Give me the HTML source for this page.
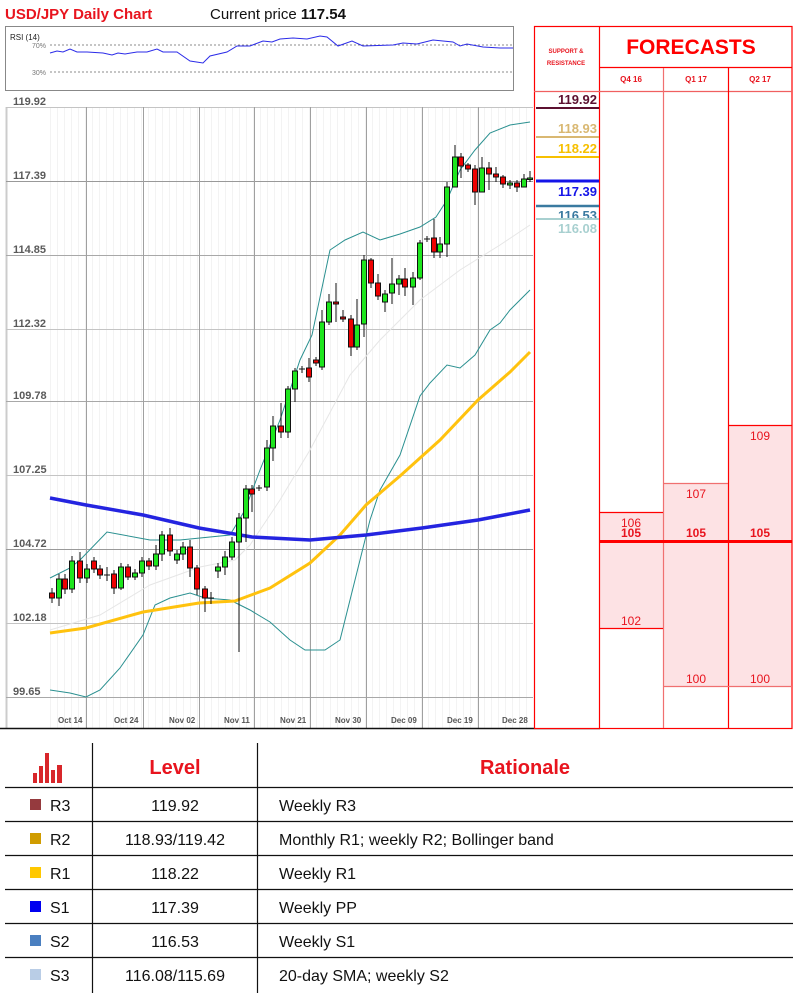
<!DOCTYPE html>
<html><head><meta charset="utf-8"><style>
html,body{margin:0;padding:0;background:#fff;}
svg{display:block;font-family:"Liberation Sans",sans-serif;}
</style></head><body>
<svg width="803" height="995" viewBox="0 0 803 995" xmlns="http://www.w3.org/2000/svg">
<defs><pattern id="fg" x="1" y="0" width="7" height="10" patternUnits="userSpaceOnUse"><rect x="0" y="0" width="1" height="10" fill="#f3f3f3"/></pattern></defs>
<!-- header -->
<text x="5" y="19" font-size="15" font-weight="bold" fill="#e8141e">USD/JPY Daily Chart</text>
<text x="210" y="19" font-size="15" fill="#111">Current price <tspan font-weight="bold">117.54</tspan></text>
<!-- RSI -->
<rect x="5.5" y="26.5" width="508" height="64" fill="#fff" stroke="#888"/>
<text x="10" y="40" font-size="8" fill="#222">RSI (14)</text>
<text x="32" y="48" font-size="7" fill="#777">70%</text>
<text x="32" y="75" font-size="7" fill="#777">30%</text>
<line x1="50" y1="45" x2="513" y2="45" stroke="#666" stroke-dasharray="2,2" stroke-width="0.8"/>
<line x1="50" y1="72" x2="513" y2="72" stroke="#666" stroke-dasharray="2,2" stroke-width="0.8"/>
<polyline fill="none" stroke="#2b2be8" stroke-width="1" points="50,53 57,51 63,52 70,49 77,52 87,52 103,53 112,55 118,53 125,54 137,52 147,52 157,49 163,52 177,52 190,61 203,63 210,56 227,52 237,46 250,46 263,41 272,42 280,39 293,38 307,39 320,36 327,37 338,46 352,41 363,46 393,45 403,43 417,44 433,40 453,42 460,46 467,44 483,47 500,48 513,48"/>
<!-- chart grid -->
<rect x="44" y="107" width="489" height="621" fill="url(#fg)"/>
<line x1="6.5" y1="107" x2="6.5" y2="728" stroke="#ccc" stroke-width="2"/>
<g stroke="#c4c4c4" stroke-width="1">
<line x1="6" y1="107.5" x2="533" y2="107.5"/><line x1="6" y1="181.5" x2="533" y2="181.5" stroke="#999"/><line x1="6" y1="255.5" x2="533" y2="255.5" stroke="#a8a8a8"/><line x1="6" y1="329.5" x2="533" y2="329.5"/><line x1="6" y1="401.5" x2="533" y2="401.5" stroke="#a8a8a8"/><line x1="6" y1="475.5" x2="533" y2="475.5"/><line x1="6" y1="549.5" x2="533" y2="549.5" stroke="#999"/><line x1="6" y1="623.5" x2="533" y2="623.5"/><line x1="6" y1="697.5" x2="533" y2="697.5" stroke="#a8a8a8"/>
</g>
<g stroke="#a0a0a0" stroke-width="1">
<line x1="86.5" y1="107" x2="86.5" y2="728"/><line x1="143.5" y1="107" x2="143.5" y2="728"/><line x1="199.5" y1="107" x2="199.5" y2="728"/><line x1="254.5" y1="107" x2="254.5" y2="728"/><line x1="310.5" y1="107" x2="310.5" y2="728"/><line x1="366.5" y1="107" x2="366.5" y2="728"/><line x1="422.5" y1="107" x2="422.5" y2="728"/><line x1="478.5" y1="107" x2="478.5" y2="728"/>
</g>
<line x1="0" y1="728.5" x2="600" y2="728.5" stroke="#111" stroke-width="1.5"/>
<g font-size="11" font-weight="bold" fill="#5a5a5a">
<text x="13" y="105">119.92</text><text x="13" y="179">117.39</text><text x="13" y="253">114.85</text><text x="13" y="327">112.32</text><text x="13" y="399">109.78</text><text x="13" y="473">107.25</text><text x="13" y="547">104.72</text><text x="13" y="621">102.18</text><text x="13" y="695">99.65</text>
</g>
<g font-size="8" font-weight="bold" fill="#555">
<text x="58" y="723">Oct 14</text><text x="114" y="723">Oct 24</text><text x="169" y="723">Nov 02</text><text x="224" y="723">Nov 11</text><text x="280" y="723">Nov 21</text><text x="335" y="723">Nov 30</text><text x="391" y="723">Dec 09</text><text x="447" y="723">Dec 19</text><text x="502" y="723">Dec 28</text>
</g>
<!-- indicator lines -->
<polyline fill="none" stroke="#e6e6e6" stroke-width="1" points="50,630 100,615 150,585 200,567 235,560 250,545 280,500 310,450 350,375 380,340 420,300 460,270 500,245 530,225"/>
<polyline fill="none" stroke="#2a9090" stroke-width="1" points="50,578 70,568 80,560 107,532 150,540 180,540 230,535 245,510 260,470 280,420 300,360 312,335 330,250 345,240 363,232 380,240 400,234 420,227 436,217 447,200 460,170 475,150 490,133 510,125 530,122"/>
<polyline fill="none" stroke="#2a9090" stroke-width="1" points="50,690 70,693 86,697 100,690 120,668 143,635 155,605 170,598 190,593 205,598 230,600 250,610 270,622 290,640 305,650 325,650 340,640 350,600 360,560 370,520 380,490 400,455 420,396 430,383 447,365 460,368 475,355 490,330 500,323 510,310 530,290"/>
<polyline fill="none" stroke="#ffc20e" stroke-width="3" points="50,633 86,628 143,612 199,603 235,601 270,588 310,563 340,535 366,505 400,476 440,440 478,400 510,372 530,352"/>
<polyline fill="none" stroke="#2424e0" stroke-width="3.5" points="50,498 86,505 143,515 199,528 252,537 310,540 366,535 422,528 478,520 530,510"/>
<!-- candles -->
<g stroke="#111" stroke-width="1">
<line x1="52" y1="588" x2="52" y2="603"/><rect x="49.5" y="593" width="5" height="5" fill="#e00"/>
<line x1="59" y1="574" x2="59" y2="606"/><rect x="56.5" y="579" width="5" height="19" fill="#1ee61e"/>
<line x1="65" y1="574" x2="65" y2="594"/><rect x="62.5" y="579" width="5" height="10" fill="#e00"/>
<line x1="72" y1="556" x2="72" y2="593"/><rect x="69.5" y="561" width="5" height="28" fill="#1ee61e"/>
<line x1="80" y1="552" x2="80" y2="583"/><rect x="77.5" y="561" width="5" height="17" fill="#e00"/>
<line x1="87" y1="564" x2="87" y2="583"/><rect x="84.5" y="569" width="5" height="9" fill="#1ee61e"/>
<line x1="94" y1="557" x2="94" y2="573"/><rect x="91.5" y="561" width="5" height="8" fill="#e00"/>
<line x1="100" y1="565" x2="100" y2="579"/><rect x="97.5" y="569" width="5" height="6" fill="#e00"/>
<line x1="107" y1="567" x2="107" y2="581"/><line x1="104" y1="575" x2="110" y2="575"/>
<line x1="114" y1="570" x2="114" y2="594"/><rect x="111.5" y="574" width="5" height="14" fill="#e00"/>
<line x1="121" y1="563" x2="121" y2="590"/><rect x="118.5" y="567" width="5" height="21" fill="#1ee61e"/>
<line x1="128" y1="564" x2="128" y2="580"/><rect x="125.5" y="567" width="5" height="10" fill="#e00"/>
<line x1="135" y1="569" x2="135" y2="580"/><rect x="132.5" y="573" width="5" height="4" fill="#1ee61e"/>
<line x1="142" y1="557" x2="142" y2="577"/><rect x="139.5" y="561" width="5" height="12" fill="#1ee61e"/>
<line x1="149" y1="558" x2="149" y2="570"/><rect x="146.5" y="561" width="5" height="5" fill="#e00"/>
<line x1="156" y1="545" x2="156" y2="570"/><rect x="153.5" y="554" width="5" height="12" fill="#1ee61e"/>
<line x1="162" y1="531" x2="162" y2="561"/><rect x="159.5" y="535" width="5" height="19" fill="#1ee61e"/>
<line x1="170" y1="528" x2="170" y2="556"/><rect x="167.5" y="535" width="5" height="16" fill="#e00"/>
<line x1="177" y1="550" x2="177" y2="564"/><rect x="174.5" y="554" width="5" height="6" fill="#1ee61e"/>
<line x1="183" y1="542" x2="183" y2="560"/><rect x="180.5" y="547" width="5" height="7" fill="#1ee61e"/>
<line x1="190" y1="540" x2="190" y2="577"/><rect x="187.5" y="547" width="5" height="21" fill="#e00"/>
<line x1="197" y1="565" x2="197" y2="595"/><rect x="194.5" y="568" width="5" height="21" fill="#e00"/>
<line x1="205" y1="586" x2="205" y2="612"/><rect x="202.5" y="589" width="5" height="9" fill="#e00"/>
<line x1="211" y1="592" x2="211" y2="604"/><line x1="208" y1="598" x2="214" y2="598"/>
<line x1="218" y1="563" x2="218" y2="578"/><rect x="215.5" y="567" width="5" height="4" fill="#1ee61e"/>
<line x1="225" y1="551" x2="225" y2="575"/><rect x="222.5" y="557" width="5" height="10" fill="#1ee61e"/>
<line x1="232" y1="537" x2="232" y2="560"/><rect x="229.5" y="542" width="5" height="15" fill="#1ee61e"/>
<line x1="239" y1="513" x2="239" y2="652"/><rect x="236.5" y="518" width="5" height="24" fill="#1ee61e"/>
<line x1="246" y1="485" x2="246" y2="542"/><rect x="243.5" y="489" width="5" height="29" fill="#1ee61e"/>
<line x1="252" y1="485" x2="252" y2="512"/><rect x="249.5" y="489" width="5" height="5" fill="#e00"/>
<line x1="259" y1="485" x2="259" y2="491"/><line x1="256" y1="488" x2="262" y2="488"/>
<line x1="267" y1="440" x2="267" y2="491"/><rect x="264.5" y="448" width="5" height="39" fill="#1ee61e"/>
<line x1="273" y1="416" x2="273" y2="461"/><rect x="270.5" y="426" width="5" height="22" fill="#1ee61e"/>
<line x1="281" y1="403" x2="281" y2="438"/><rect x="278.5" y="426" width="5" height="6" fill="#e00"/>
<line x1="288" y1="386" x2="288" y2="438"/><rect x="285.5" y="389" width="5" height="43" fill="#1ee61e"/>
<line x1="295" y1="368" x2="295" y2="402"/><rect x="292.5" y="371" width="5" height="18" fill="#1ee61e"/>
<line x1="302" y1="366" x2="302" y2="373"/><line x1="299" y1="369" x2="305" y2="369"/>
<line x1="309" y1="358" x2="309" y2="382"/><rect x="306.5" y="368" width="5" height="9" fill="#e00"/>
<line x1="316" y1="357" x2="316" y2="366"/><rect x="313.5" y="360" width="5" height="3" fill="#e00"/>
<line x1="322" y1="310" x2="322" y2="370"/><rect x="319.5" y="322" width="5" height="45" fill="#1ee61e"/>
<line x1="329" y1="294" x2="329" y2="325"/><rect x="326.5" y="302" width="5" height="20" fill="#1ee61e"/>
<line x1="336" y1="283" x2="336" y2="322"/><rect x="333.5" y="302" width="5" height="2" fill="#e00"/>
<line x1="343" y1="310" x2="343" y2="322"/><rect x="340.5" y="317" width="5" height="2" fill="#e00"/>
<line x1="351" y1="315" x2="351" y2="356"/><rect x="348.5" y="319" width="5" height="28" fill="#e00"/>
<line x1="357" y1="299" x2="357" y2="350"/><rect x="354.5" y="325" width="5" height="22" fill="#1ee61e"/>
<line x1="364" y1="255" x2="364" y2="337"/><rect x="361.5" y="260" width="5" height="64" fill="#1ee61e"/>
<line x1="371" y1="258" x2="371" y2="288"/><rect x="368.5" y="260" width="5" height="23" fill="#e00"/>
<line x1="378" y1="274" x2="378" y2="300"/><rect x="375.5" y="283" width="5" height="13" fill="#e00"/>
<line x1="385" y1="290" x2="385" y2="312"/><rect x="382.5" y="294" width="5" height="8" fill="#1ee61e"/>
<line x1="392" y1="258" x2="392" y2="304"/><rect x="389.5" y="284" width="5" height="9" fill="#1ee61e"/>
<line x1="399" y1="275" x2="399" y2="295"/><rect x="396.5" y="279" width="5" height="5" fill="#1ee61e"/>
<line x1="405" y1="268" x2="405" y2="296"/><rect x="402.5" y="279" width="5" height="8" fill="#e00"/>
<line x1="413" y1="272" x2="413" y2="305"/><rect x="410.5" y="278" width="5" height="9" fill="#1ee61e"/>
<line x1="420" y1="240" x2="420" y2="280"/><rect x="417.5" y="243" width="5" height="35" fill="#1ee61e"/>
<line x1="427" y1="236" x2="427" y2="242"/><line x1="424" y1="239" x2="430" y2="239"/>
<line x1="434" y1="219" x2="434" y2="258"/><rect x="431.5" y="238" width="5" height="14" fill="#e00"/>
<line x1="440" y1="237" x2="440" y2="258"/><rect x="437.5" y="244" width="5" height="8" fill="#1ee61e"/>
<line x1="447" y1="182" x2="447" y2="257"/><rect x="444.5" y="187" width="5" height="57" fill="#1ee61e"/>
<line x1="455" y1="145" x2="455" y2="187"/><rect x="452.5" y="157" width="5" height="30" fill="#1ee61e"/>
<line x1="461" y1="153" x2="461" y2="178"/><rect x="458.5" y="157" width="5" height="9" fill="#e00"/>
<line x1="468" y1="163" x2="468" y2="172"/><rect x="465.5" y="165" width="5" height="4" fill="#e00"/>
<line x1="475" y1="165" x2="475" y2="205"/><rect x="472.5" y="169" width="5" height="23" fill="#e00"/>
<line x1="482" y1="157" x2="482" y2="192"/><rect x="479.5" y="168" width="5" height="24" fill="#1ee61e"/>
<line x1="489" y1="162" x2="489" y2="190"/><rect x="486.5" y="168" width="5" height="6" fill="#e00"/>
<line x1="496" y1="167" x2="496" y2="182"/><rect x="493.5" y="174" width="5" height="3" fill="#e00"/>
<line x1="503" y1="175" x2="503" y2="188"/><rect x="500.5" y="177" width="5" height="7" fill="#e00"/>
<line x1="510" y1="180" x2="510" y2="189"/><rect x="507.5" y="183" width="5" height="2" fill="#1ee61e"/>
<line x1="517" y1="180" x2="517" y2="192"/><rect x="514.5" y="183" width="5" height="4" fill="#e00"/>
<line x1="524" y1="174" x2="524" y2="187"/><rect x="521.5" y="179" width="5" height="8" fill="#1ee61e"/>
<line x1="530" y1="171" x2="530" y2="182"/><rect x="527.5" y="178" width="5" height="1.5" fill="#1ee61e"/>
</g>
<!-- right panel -->
<rect x="534" y="26" width="258" height="702" fill="#fff"/>
<rect x="599" y="512" width="64" height="116" fill="#fde2e4"/>
<rect x="663" y="483" width="65" height="203" fill="#fde2e4"/>
<rect x="728" y="425" width="64" height="261" fill="#fde2e4"/>
<g stroke="#f00" stroke-width="1.2" fill="none">
<rect x="534.5" y="26.5" width="257.5" height="702"/>
<line x1="599.5" y1="26" x2="599.5" y2="728"/>
<line x1="599" y1="67.5" x2="792" y2="67.5"/>
<line x1="534" y1="91.5" x2="792" y2="91.5" stroke="#f06060"/>
<line x1="663.5" y1="68" x2="663.5" y2="728" stroke="#f07070"/>
<line x1="728.5" y1="68" x2="728.5" y2="728"/>
<line x1="599" y1="512.5" x2="663" y2="512.5"/>
<line x1="599" y1="628.5" x2="663" y2="628.5"/>
<line x1="663" y1="483.5" x2="728" y2="483.5" stroke="#f07070"/>
<line x1="663" y1="686.5" x2="792" y2="686.5" stroke="#f07070"/>
<line x1="728" y1="425.5" x2="792" y2="425.5"/>
</g>
<line x1="599" y1="541.5" x2="792" y2="541.5" stroke="#f00" stroke-width="3"/>
<text x="566" y="53" font-size="6" font-weight="bold" fill="#e8141e" text-anchor="middle">SUPPORT &amp;</text>
<text x="566" y="65" font-size="6" font-weight="bold" fill="#e8141e" text-anchor="middle">RESISTANCE</text>
<text x="691" y="54" font-size="21" font-weight="bold" fill="#f00" text-anchor="middle">FORECASTS</text>
<g font-size="8" font-weight="bold" fill="#e8141e" text-anchor="middle">
<text x="631" y="82">Q4 16</text><text x="696" y="82">Q1 17</text><text x="760" y="82">Q2 17</text></g>
<g font-size="13" font-weight="bold" text-anchor="end">
<text x="597" y="104" fill="#5c1030">119.92</text>
<text x="597" y="133" fill="#d9b872">118.93</text>
<text x="597" y="153" fill="#f7c000">118.22</text>
<text x="597" y="196" fill="#1414e8">117.39</text>
<text x="597" y="220" fill="#3a7aa0">116.53</text>
<text x="597" y="233" fill="#a8d0d0">116.08</text></g>
<line x1="536" y1="108" x2="599" y2="108" stroke="#5c1030" stroke-width="2"/>
<line x1="536" y1="137" x2="599" y2="137" stroke="#d9b872" stroke-width="2"/>
<line x1="536" y1="157" x2="599" y2="157" stroke="#f7c000" stroke-width="2"/>
<line x1="536" y1="181" x2="599" y2="181" stroke="#1414e8" stroke-width="3"/>
<line x1="536" y1="206" x2="599" y2="206" stroke="#3a7aa0" stroke-width="2.5"/>
<line x1="536" y1="219" x2="599" y2="219" stroke="#a8d0d0" stroke-width="2"/>
<g font-size="12" fill="#e8141e" text-anchor="middle">
<text x="631" y="527">106</text><text x="631" y="625">102</text>
<text x="696" y="498">107</text><text x="696" y="683">100</text>
<text x="760" y="440">109</text><text x="760" y="683">100</text></g>
<g font-size="12" font-weight="bold" fill="#e8141e" text-anchor="middle">
<text x="631" y="537">105</text><text x="696" y="537">105</text><text x="760" y="537">105</text></g>
<!-- table -->
<g stroke="#111" stroke-width="1.2">
<line x1="92.5" y1="743" x2="92.5" y2="993"/><line x1="257.5" y1="743" x2="257.5" y2="993"/>
<line x1="5" y1="787.5" x2="793" y2="787.5"/><line x1="5" y1="821.5" x2="793" y2="821.5"/><line x1="5" y1="855.5" x2="793" y2="855.5"/><line x1="5" y1="889.5" x2="793" y2="889.5"/><line x1="5" y1="923.5" x2="793" y2="923.5"/><line x1="5" y1="957.5" x2="793" y2="957.5"/>
</g>
<g fill="#d8262a"><rect x="33" y="773" width="4" height="10"/><rect x="39" y="766" width="4" height="17"/><rect x="45" y="753" width="4" height="30"/><rect x="51" y="770" width="4" height="13"/><rect x="57" y="765" width="5" height="18"/></g>
<text x="175" y="774" font-size="20" font-weight="bold" fill="#e8141e" text-anchor="middle">Level</text>
<text x="525" y="774" font-size="20" font-weight="bold" fill="#e8141e" text-anchor="middle">Rationale</text>
<rect x="30" y="799" width="11" height="11" fill="#953a3e"/>
<rect x="30" y="833" width="11" height="11" fill="#d09c00"/>
<rect x="30" y="867" width="11" height="11" fill="#ffc800"/>
<rect x="30" y="901" width="11" height="11" fill="#0000f0"/>
<rect x="30" y="935" width="11" height="11" fill="#4a7fc0"/>
<rect x="30" y="969" width="11" height="11" fill="#b9cde6"/>
<g font-size="16" fill="#111">
<text x="50" y="811">R3</text><text x="50" y="845">R2</text><text x="50" y="879">R1</text><text x="50" y="913">S1</text><text x="50" y="947">S2</text><text x="50" y="981">S3</text>
<g text-anchor="middle"><text x="175" y="811">119.92</text><text x="175" y="845">118.93/119.42</text><text x="175" y="879">118.22</text><text x="175" y="913">117.39</text><text x="175" y="947">116.53</text><text x="175" y="981">116.08/115.69</text></g>
<text x="279" y="811">Weekly R3</text><text x="279" y="845">Monthly R1; weekly R2; Bollinger band</text><text x="279" y="879">Weekly R1</text><text x="279" y="913">Weekly PP</text><text x="279" y="947">Weekly S1</text><text x="279" y="981">20-day SMA; weekly S2</text>
</g>
</svg>
</body></html>
